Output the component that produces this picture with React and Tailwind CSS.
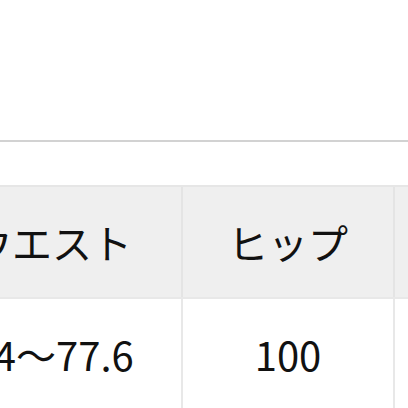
const headers = ["ウエスト", "ヒップ", ""];
const values = ["63.4～77.6", "100", ""];
const widths = ["w-[274px]", "w-[212px]", "w-[212px]"];
const headPad = ["pl-[14px]", "", ""];
const valuePad = ["pr-[18px]", "", ""];

const App = () => {
  return (
    <div
      className="w-[408px] h-[408px] overflow-hidden bg-white text-[#111]"
      style={{ fontFamily: '"Noto Sans CJK JP", "Noto Sans", sans-serif' }}
    >
      {/* top area + divider */}
      <div className="h-[140px]"></div>
      <div className="h-[2px] bg-[#d2d2d2]"></div>
      <div className="h-[43px]"></div>

      {/* size table */}
      <div className="ml-[-91px] w-[700px] border-t-2 border-[#e6e6e6]">
        <div className="flex bg-[#efefef] border-b-2 border-[#e8e8e8]">
          {headers.map((h, i) => (
            <div
              key={i}
              className={`${widths[i]} ${headPad[i]} h-[110px] shrink-0 flex items-center justify-center border-r-2 border-[#e4e4e4] text-[40px]`}
            >
              {h}
            </div>
          ))}
        </div>
        <div className="flex bg-white">
          {values.map((v, i) => (
            <div
              key={i}
              className={`${widths[i]} ${valuePad[i]} h-[110px] shrink-0 flex items-center justify-center border-r-2 border-[#e8e8e8] text-[40px]`}
            >
              {v}
            </div>
          ))}
        </div>
      </div>
    </div>
  );
};

export default App;
